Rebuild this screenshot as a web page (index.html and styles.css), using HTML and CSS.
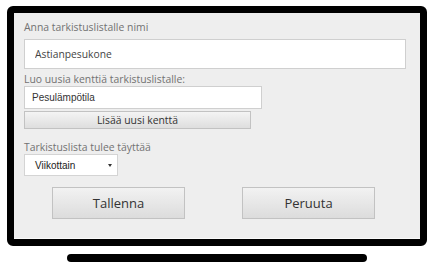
FILE: index.html
```html
<!DOCTYPE html>
<html lang="fi">
<head>
    <meta charset="UTF-8">
    <meta name="viewport" content="width=device-width, initial-scale=1.0">
    <title>Uusi tarkistuslista</title>
    <link rel="stylesheet" href="styles.css">
</head>
<body>
    <div class="device">
        <div class="screen">
            <label class="field-label" for="name">Anna tarkistuslistalle nimi</label>
            <input class="name-input" id="name" type="text" value="Astianpesukone">

            <label class="field-label" for="field">Luo uusia kenttiä tarkistuslistalle:</label>
            <input class="field-input" id="field" type="text" value="Pesulämpötila">
            <button class="add-button">Lisää uusi kenttä</button>

            <label class="field-label label-gap" for="freq">Tarkistuslista tulee täyttää</label>
            <div class="select">
                <span>Viikottain</span>
                <span class="arrow"></span>
            </div>

            <div class="actions">
                <button class="big-button">Tallenna</button>
                <button class="big-button">Peruuta</button>
            </div>
        </div>
    </div>
    <div class="stand"></div>
</body>
</html>
```
FILE: styles.css
```css
body {
    margin: 0;
    padding: 6px 0 0 7px;
    background-color: #fff;
    font-family: "Open Sans", sans-serif;
}

.device {
    width: 406px;
    height: 226px;
    border: 7px solid #000;
    border-radius: 6px;
    background-color: #eee;
    box-shadow: inset 0 -1px 0 #fafafa;
    overflow: hidden;
}

.screen {
    display: flex;
    flex-direction: column;
    align-items: flex-start;
    padding: 7px 0 0 10px;
}

.field-label {
    font-size: 10.4px;
    line-height: 14px;
    color: #727272;
}

.name-input {
    box-sizing: border-box;
    width: 382px;
    height: 30px;
    margin: 5px 0 3px 0;
    padding: 0 0 0 10px;
    border: 1px solid #cfcfcf;
    background-color: #fff;
    font-family: "Open Sans", sans-serif;
    font-size: 10.3px;
    color: #444;
}

.field-input {
    box-sizing: border-box;
    width: 238px;
    height: 23px;
    margin: 0;
    padding: 0 0 0 7px;
    border: 1px solid #cfcfcf;
    background-color: #fff;
    font-family: "Liberation Sans", Arial, sans-serif;
    font-size: 10px;
    color: #333;
}

.add-button {
    box-sizing: border-box;
    width: 227px;
    height: 18px;
    margin-top: 2px;
    padding: 0;
    border: 1px solid #c2c2c2;
    background: linear-gradient(#f4f4f4, #dedede);
    font-family: "Open Sans", sans-serif;
    font-size: 10.4px;
    color: #333;
}

.label-gap {
    margin-top: 11px;
}

.select {
    box-sizing: border-box;
    width: 94px;
    height: 22px;
    display: flex;
    align-items: center;
    justify-content: space-between;
    padding: 0 5px 0 10px;
    border: 1px solid #d4d4d4;
    background-color: #fff;
    font-family: "Liberation Sans", Arial, sans-serif;
    font-size: 10px;
    color: #222;
}

.arrow {
    width: 0;
    height: 0;
    border-left: 2px solid transparent;
    border-right: 2px solid transparent;
    border-top: 3px solid #333;
}

.actions {
    display: flex;
    gap: 57px;
    margin: 11px 0 0 28px;
}

.big-button {
    box-sizing: border-box;
    width: 133px;
    height: 32px;
    padding: 0;
    border: 1px solid #c2c2c2;
    background: linear-gradient(#f2f2f2, #dcdcdc);
    font-family: "Open Sans", sans-serif;
    font-size: 13px;
    color: #333;
}

.stand {
    width: 300px;
    height: 8px;
    margin: 8px 0 0 60px;
    border-radius: 4px;
    background-color: #000;
}
```
